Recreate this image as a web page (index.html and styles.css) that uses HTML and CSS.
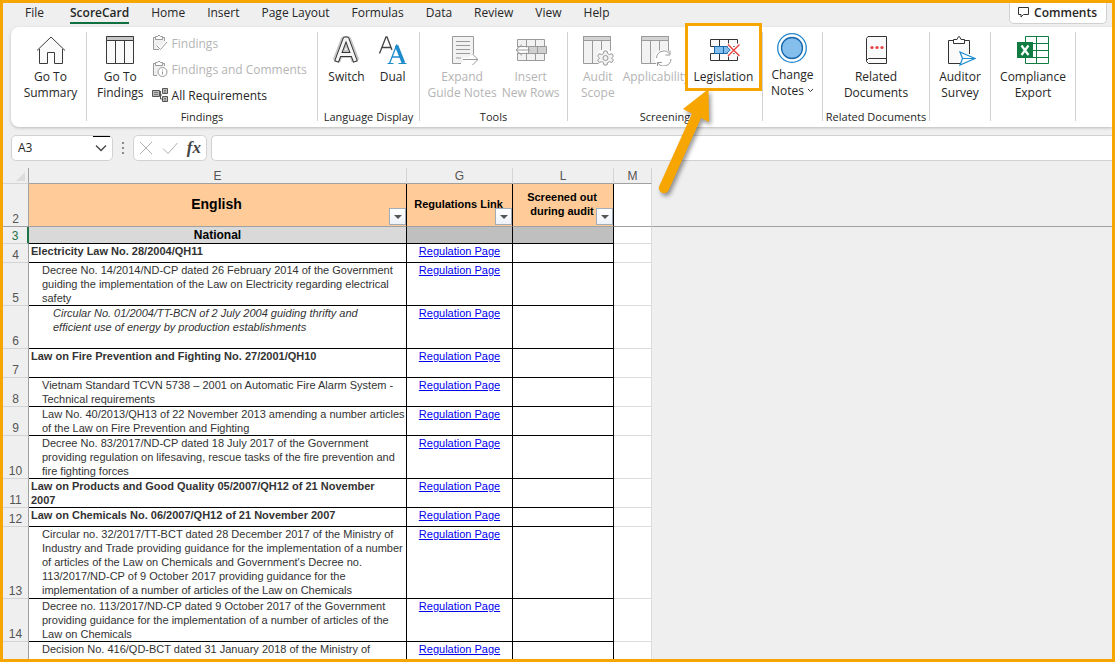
FILE: index.html
```html
<!DOCTYPE html>
<html lang="en">
<head>
<meta charset="utf-8">
<title>ScoreCard</title>
<link rel="stylesheet" href="styles.css">
</head>
<body>
<div class="window">
  <nav class="tabs">
    <button class="tab first">File</button>
    <button class="tab active">ScoreCard</button>
    <button class="tab">Home</button>
    <button class="tab">Insert</button>
    <button class="tab">Page Layout</button>
    <button class="tab">Formulas</button>
    <button class="tab">Data</button>
    <button class="tab">Review</button>
    <button class="tab">View</button>
    <button class="tab">Help</button>
    <button class="comments">
      <svg width="12" height="12" viewBox="0 0 12 12" fill="none" stroke="#333"><path d="M.5 1.500h10v7h-5l-2.500 2.500v-2.500h-2.500z"/></svg>
      Comments
    </button>
  </nav>

  <section class="ribbon">
    <div class="group g-summary">
      <div class="tools">
        <button class="tool">
          <svg class="icon" viewBox="0 0 32 32" fill="none" stroke="#3b3b3b"><path fill="#fafafa" d="M4.500 15v14.500h8v-11h7v11h8V15L16 3.500z" stroke="none"/><path d="M2 16.500L16 3l14 13.500M4.500 15v14.500h8v-11h7v11h8V15"/></svg>
          <span>Go To<br>Summary</span>
        </button>
      </div>
    </div>
    <div class="group g-findings">
      <div class="tools">
        <button class="tool">
          <svg class="icon" viewBox="0 0 32 32" fill="#fafafa" stroke="#3b3b3b"><path d="M2.500 2.500h27v27h-27z"/><path fill="#c8c8c8" d="M2.500 2.500h27v4h-27z"/><path d="M11.500 6v23M20.500 6v23"/></svg>
          <span>Go To<br>Findings</span>
        </button>
        <div class="stack">
          <button class="row-tool" disabled>
            <svg width="16" height="18" viewBox="0 0 16 18" fill="none" stroke="#9a9a9a"><path fill="#f0f0f0" d="M6 15.500H1.500v-12h11V8l-4 5-2-2-2 1z" stroke="none"/><path d="M7 15.500H1.500v-12h2M10.500 3.500h2V7"/><path fill="#fff" d="M3.500 5.500v-3h2Q7-.5 8.500 2.500h2v3z"/><path d="M4.500 11.500l4 4 6.500-7.500"/></svg>
            Findings
          </button>
          <button class="row-tool" disabled>
            <svg width="16" height="18" viewBox="0 0 16 18" fill="none" stroke="#9a9a9a"><path fill="#f0f0f0" d="M5 15.500H1.500v-12h11V8z" stroke="none"/><path d="M5 15.500H1.500v-12h2M10.500 3.500h2V6"/><path fill="#fff" d="M3.500 5.500v-3h2Q7-.5 8.500 2.500h2v3z"/><circle cx="10.500" cy="12" r="4.500" fill="#fff"/><path d="M10.500 11.500v3M10.500 9.500v1"/></svg>
            Findings and Comments
          </button>
          <button class="row-tool">
            <svg width="16" height="16" viewBox="0 0 16 16" fill="#bbb" stroke="#555"><path d="M6 8h4M8.500 4v8h2" fill="none"/><path d="M.5 3.500h7v6h-7zM10.500 1.500h5v5h-5zM10.500 9.500h5v5h-5z"/><path d="M2 5.500h4M2 7.500h4M12 3.500h2M12 5h2M12 11.500h2M12 13h2" stroke="#777"/></svg>
            All Requirements
          </button>
        </div>
      </div>
      <div class="caption">Findings</div>
    </div>
    <div class="group g-language">
      <div class="tools">
        <button class="tool">
          <svg class="icon" viewBox="0 0 32 32" fill="none" stroke-linejoin="round"><path d="M6.500 27L14.500 6h3L25.500 27M10 20h12" stroke="#c6c6c6" stroke-width="8"/><path d="M6.500 28L15 5h2l8.500 23M10 20.500h12" stroke="#333" stroke-width="5"/><path d="M6.800 27L15 5h2l8.200 22M10 20.500h12" stroke="#f5f5f5" stroke-width="3"/></svg>
          <span>Switch</span>
        </button>
        <button class="tool">
          <svg class="icon" viewBox="0 0 32 32" fill="none"><path d="M2.500 19.500L9 3h1l5 13M5 13.500h9" stroke="#444" stroke-width="1.300"/><path d="M12.500 29.500l7-18 7.500 18M14.500 23h9" stroke="#1e8bcd" stroke-width="1.300"/><path d="M19.500 11.500l7 17.500" stroke="#1e8bcd" stroke-width="3.500"/><path d="M10.500 29.500h6M21.500 29.500h8" stroke="#1e8bcd"/></svg>
          <span>Dual</span>
        </button>
      </div>
      <div class="caption">Language Display</div>
    </div>
    <div class="group g-tools">
      <div class="tools">
        <button class="tool" disabled>
          <svg class="icon" viewBox="0 0 32 32" fill="none" stroke="#9a9a9a"><path fill="#f2f2f2" d="M14 29.500H6.500v-27h21V20" stroke="none"/><path d="M15 29.500H6.500v-27h21V20"/><path d="M10 7.500h14M10 11.500h14M10 15.500h14M10 19.500h14M10 24h5"/><path stroke="#fff" stroke-width="4" d="M17 25.500h12"/><path d="M17 25.500h15M26.500 20l5.500 5.500-5.500 5.500"/></svg>
          <span>Expand<br>Guide Notes</span>
        </button>
        <button class="tool" disabled>
          <svg class="icon" viewBox="0 0 32 32" fill="none" stroke="#9a9a9a"><path fill="#f2f2f2" d="M2.500 5.500h27v21h-27z"/><path d="M2.500 12.500h27M2.500 19.500h27M11.500 5v21M20.500 5v21"/><path stroke="#fff" stroke-width="5" d="M0 16h13"/><path fill="#d0d0d0" d="M13.500 12.500h18v7h-18zM22.500 12.500v7"/><path d="M1 16h14M7 10.500l-6 5.500 6 5.500"/></svg>
          <span>Insert<br>New Rows</span>
        </button>
      </div>
      <div class="caption">Tools</div>
    </div>
    <div class="group g-screening">
      <div class="tools">
        <button class="tool" disabled>
          <svg class="icon" viewBox="0 0 32 32" fill="#f2f2f2" stroke="#9a9a9a"><path d="M1.500 2.500h27v27h-27z"/><path fill="#d4d4d4" d="M1.500 2.500h27v4h-27z"/><path d="M10.500 6v23M19.500 6v23"/><circle cx="23.500" cy="24" r="9" fill="#fff" stroke="none"/><path d="M22 17h3l.6 2.500 1.800 1 2.500-.8 1.500 2.600-1.900 1.700 1.900 2-1.500 2.500-2.500-.8-1.800 1L25 31h-3l-.6-2.300-1.800-1-2.500.8-1.500-2.500 1.900-2-1.900-1.700 1.500-2.600 2.500.8 1.800-1z"/><circle cx="23.500" cy="24" r="2.500"/></svg>
          <span>Audit<br>Scope</span>
        </button>
        <button class="tool" disabled>
          <svg class="icon" viewBox="0 0 32 32" fill="#f2f2f2" stroke="#9a9a9a"><path d="M1.500 2.500h27v27h-27z"/><path fill="#d4d4d4" d="M1.500 2.500h27v4h-27z"/><path d="M10.500 6v23M19.500 6v23"/><circle cx="23.500" cy="24.500" r="9" fill="#fff" stroke="none"/><path fill="none" d="M16.500 24a7.300 7.300 0 0 1 13.500-3.500V16.500M30 21h-4.500M31 25a7.300 7.300 0 0 1-13.500 3.500V32M17.500 28.500H22"/></svg>
          <span>Applicability</span>
        </button>
        <button class="tool highlighted">
          <svg class="icon" viewBox="0 0 32 32" fill="none" stroke="#333"><path fill="#fafafa" d="M2.500 5.500h27v7h-27zM2.500 19.500h27v7h-27z"/><path d="M11.500 5v7M20.500 5v7M11.500 19v7M20.500 19v7"/><path fill="#83beec" stroke="#1767ad" d="M6.500 12.500h12l4 3.500-4 3.500h-12zM15.500 12.500v7"/><path stroke="#fff" stroke-width="4" d="M20 10l12 12M32 10L20 22"/><path stroke="#e8413f" stroke-width="1.400" d="M20 10.500l11.500 11.500M31.500 10.500L20 22"/></svg>
          <span>Legislation</span>
          <svg class="pointer" width="64" height="112" viewBox="0 0 64 112"><path d="M54.500 2L29 22l9 4.500L5.500 98.500a5 5 0 0 0 9 5L47 31l8 4z" fill="#f7a500"/></svg>
        </button>
      </div>
      <div class="caption">Screening</div>
    </div>
    <div class="group g-notes">
      <div class="tools">
        <button class="tool">
          <svg class="icon" viewBox="0 0 32 32" fill="none" stroke="#1f86cf"><circle cx="16" cy="16" r="14.300" stroke-width="1.300"/><circle cx="16" cy="16" r="10.500" fill="#83beec" stroke="#1767ad" stroke-width="1.300"/></svg>
          <span>Change<br>Notes <svg width="7" height="8" viewBox="0 0 7 8" fill="none" stroke="#333"><path d="M1 2l2.500 2.500L6 2"/></svg></span>
        </button>
      </div>
    </div>
    <div class="group g-related">
      <div class="tools">
        <button class="tool">
          <svg class="icon" viewBox="0 0 32 32" fill="none" stroke="#333"><path fill="#fafafa" d="M8 2.500h18.500v27H8.500l-2-2v-23zM26 24.500H8.500l-2 2"/><g fill="#e8413f" stroke="none"><circle cx="12" cy="13.500" r="1.600"/><circle cx="17" cy="13.500" r="1.600"/><circle cx="22" cy="13.500" r="1.600"/></g></svg>
          <span>Related<br>Documents</span>
        </button>
      </div>
      <div class="caption">Related Documents</div>
    </div>
    <div class="group g-survey">
      <div class="tools">
        <button class="tool">
          <svg class="icon" viewBox="0 0 32 32" fill="none" stroke="#333"><path fill="#fafafa" d="M15 29.500H4.500v-23h21V20L16 18z" stroke="none"/><path d="M16 29.500H4.500v-23h5M20.500 6.500h5V20"/><path fill="#fff" d="M9.500 9.500v-4h3.500Q15-.5 17 5.500h3.500v4z"/><path fill="#fff" stroke="#1e8bcd" stroke-width="1.200" d="M16 18l15 6.500L16 31l2.500-6.500zM18.500 24.500H30"/></svg>
          <span>Auditor<br>Survey</span>
        </button>
      </div>
    </div>
    <div class="group g-export">
      <div class="tools">
        <button class="tool">
          <svg class="icon" viewBox="0 0 32 32" fill="none" stroke="#107c41"><path fill="#fff" d="M8.500 2.500h23v27h-23z"/><path d="M19.500 2v27M8 9.500h23M8 16.500h23M8 23.500h23"/><path d="M0 8h16v16H0z" fill="#107c41" stroke="none"/><path d="M4.500 11.500l7 9.500M11.500 11.500l-7 9.500" stroke="#fff" stroke-width="2.200"/></svg>
          <span>Compliance<br>Export</span>
        </button>
      </div>
    </div>
  </section>

  <div class="formula-bar">
    <label class="name-box">
      <input class="name-input" type="text" value="A3" aria-label="Name box">
      <svg width="12" height="8" viewBox="0 0 12 8" fill="none" stroke="#444" stroke-width="1.300"><path d="M1 1.500L6 6.500l5-5"/></svg>
    </label>
    <svg class="dots" width="3" height="12" viewBox="0 0 3 12" fill="#8a8a8a"><path d="M0 0h2v2H0zM0 5h2v2H0zM0 10h2v2H0z"/></svg>
    <div class="entry-buttons">
      <button aria-label="Cancel"><svg width="14" height="14" viewBox="0 0 14 14" stroke="#b0b0b0"><path d="M1 1l12 12M13 1L1 13"/></svg></button>
      <button aria-label="Enter"><svg width="16" height="14" viewBox="0 0 16 14" fill="none" stroke="#b0b0b0"><path d="M1 7.500l5 5L15.500 2"/></svg></button>
      <button class="fx">fx</button>
    </div>
    <input class="formula" type="text" aria-label="Formula">
  </div>

  <main class="sheet">
    <table>
      <colgroup><col class="c-num"><col class="c-e"><col class="c-g"><col class="c-l"><col class="c-m"><col></colgroup>
      <thead>
        <tr class="letters"><th class="corner"><svg width="9" height="9" viewBox="0 0 9 9" fill="#dcdcdc"><path d="M9 0v9H0z"/></svg></th><th>E</th><th>G</th><th>L</th><th>M</th><th class="void"></th></tr>
        <tr class="titles">
          <th class="num">2</th>
          <th class="title big">English<button class="filter" aria-label="Filter English"></button></th>
          <th class="title">Regulations Link<button class="filter" aria-label="Filter links"></button></th>
          <th class="title">Screened out<br>during audit<button class="filter" aria-label="Filter screened out"></button></th>
          <td class="m"></td><td class="void"></td>
        </tr>
      </thead>
      <tbody>
        <tr class="national"><th class="num">3</th><td class="region">National</td><td class="dark"></td><td class="dark"></td><td class="m"></td><td class="void"></td></tr>
        <tr class="h1"><th class="num">4</th><td class="law">Electricity Law No. 28/2004/QH11</td><td class="link"><a href="#">Regulation Page</a></td><td></td><td class="m"></td><td class="void"></td></tr>
        <tr class="h3"><th class="num">5</th><td class="decree">Decree No. 14/2014/ND-CP dated 26 February 2014 of the Government<br>guiding the implementation of the Law on Electricity regarding electrical<br>safety</td><td class="link"><a href="#">Regulation Page</a></td><td></td><td class="m"></td><td class="void"></td></tr>
        <tr class="h3"><th class="num">6</th><td class="circular">Circular No. 01/2004/TT-BCN of 2 July 2004 guiding thrifty and<br>efficient use of energy by production establishments</td><td class="link"><a href="#">Regulation Page</a></td><td></td><td class="m"></td><td class="void"></td></tr>
        <tr class="h2"><th class="num">7</th><td class="law">Law on Fire Prevention and Fighting No. 27/2001/QH10</td><td class="link"><a href="#">Regulation Page</a></td><td></td><td class="m"></td><td class="void"></td></tr>
        <tr class="h2"><th class="num">8</th><td class="decree">Vietnam Standard TCVN 5738 – 2001 on Automatic Fire Alarm System -<br>Technical requirements</td><td class="link"><a href="#">Regulation Page</a></td><td></td><td class="m"></td><td class="void"></td></tr>
        <tr class="h2"><th class="num">9</th><td class="decree">Law No. 40/2013/QH13 of 22 November 2013 amending a number articles<br>of the Law on Fire Prevention and Fighting</td><td class="link"><a href="#">Regulation Page</a></td><td></td><td class="m"></td><td class="void"></td></tr>
        <tr class="h3"><th class="num">10</th><td class="decree">Decree No. 83/2017/ND-CP dated 18 July 2017 of the Government<br>providing regulation on lifesaving, rescue tasks of the fire prevention and<br>fire fighting forces</td><td class="link"><a href="#">Regulation Page</a></td><td></td><td class="m"></td><td class="void"></td></tr>
        <tr class="h2"><th class="num">11</th><td class="law">Law on Products and Good Quality 05/2007/QH12 of 21 November<br>2007</td><td class="link"><a href="#">Regulation Page</a></td><td></td><td class="m"></td><td class="void"></td></tr>
        <tr class="h1"><th class="num">12</th><td class="law">Law on Chemicals No. 06/2007/QH12 of 21 November 2007</td><td class="link"><a href="#">Regulation Page</a></td><td></td><td class="m"></td><td class="void"></td></tr>
        <tr class="h5"><th class="num">13</th><td class="decree">Circular no. 32/2017/TT-BCT dated 28 December 2017 of the Ministry of<br>Industry and Trade providing guidance for the implementation of a number<br>of articles of the Law on Chemicals and Government's Decree no.<br>113/2017/ND-CP of 9 October 2017 providing guidance for the<br>implementation of a number of articles of the Law on Chemicals</td><td class="link"><a href="#">Regulation Page</a></td><td></td><td class="m"></td><td class="void"></td></tr>
        <tr class="h3"><th class="num">14</th><td class="decree">Decree no. 113/2017/ND-CP dated 9 October 2017 of the Government<br>providing guidance for the implementation of a number of articles of the<br>Law on Chemicals</td><td class="link"><a href="#">Regulation Page</a></td><td></td><td class="m"></td><td class="void"></td></tr>
        <tr class="h3"><th class="num"></th><td class="decree">Decision No. 416/QD-BCT dated 31 January 2018 of the Ministry of<br>Industry and Trade on promulgating periodic/administrative</td><td class="link"><a href="#">Regulation Page</a></td><td></td><td class="m"></td><td class="void"></td></tr>
      </tbody>
    </table>
  </main>
</div>
</body>
</html>
```
FILE: styles.css
```css
* { box-sizing: border-box; }
body { margin: 0; font-family: "Open Sans", "Noto Sans", sans-serif; font-size: 12px; color: #262626; }
button { font: inherit; color: inherit; background: none; border: 0; padding: 0; margin: 0; white-space: nowrap; }
input { font: inherit; color: inherit; border: 0; outline: 0; background: none; min-width: 0; }
svg { flex: none; }

.window { height: 100vh; border: 3px solid #f7a500; background: #efefef; overflow: hidden; display: flex; flex-direction: column; }

.tabs { flex: none; display: flex; align-items: flex-start; gap: 22px; height: 24px; padding: 0 5px 0 22px; }
.tab { height: 21px; line-height: 19px; border-bottom: 2px solid transparent; }
.tab.first { padding-right: 4px; }
.tab.active { border-color: #107040; font-weight: 600; }
.comments { margin-left: auto; display: flex; align-items: center; gap: 4px; height: 21px; padding: 0 9px 2px 8px; background: #fff; border: 1px solid #d0d0d0; border-top: 0; border-radius: 0 0 5px 5px; font-weight: 600; }

.ribbon { flex: none; display: flex; height: 100px; margin-left: 8px; padding: 5px 0 6px; background: #fff; border-radius: 8px 0 0 8px; box-shadow: 0 1px 3px #bbb; }
.group { flex: none; position: relative; display: flex; flex-direction: column; justify-content: space-between; border-right: 1px solid #d2d2d2; }
.tools { display: flex; justify-content: center; align-items: flex-start; padding-top: 2px; }
.tool { display: flex; flex-direction: column; align-items: center; gap: 3px; line-height: 16px; text-align: center; }
.tool:disabled, .row-tool:disabled { color: #b4b4b4; }
.icon { width: 32px; height: 32px; }
.caption { font-size: 11px; line-height: 14px; text-align: center; white-space: nowrap; margin-bottom: -3px; }
.stack { display: flex; flex-direction: column; }
.row-tool { display: flex; align-items: center; gap: 4px; height: 26px; }

.g-summary { width: 76px; }
.g-summary .tools { padding-left: 4px; }
.g-findings { width: 231px; }
.g-findings .tools { justify-content: flex-start; gap: 8px; padding-left: 10px; }
.g-findings .stack { margin-top: -4px; height: 78px; }
.g-language { width: 102px; }
.g-language .tools { gap: 12px; }
.g-tools { width: 148px; }
.g-tools .tools { gap: 5px; }
.g-screening { width: 195px; }
.g-screening .tools { justify-content: flex-start; padding-left: 13px; gap: 8px; }
.g-notes { width: 60px; }
.g-notes .tools { padding-top: 0; }
.g-related { width: 107px; }
.g-survey { width: 61px; }
.g-export { width: 85px; }

.highlighted { position: absolute; right: 0; top: -9px; width: 77px; height: 68px; padding-top: 8px; background: #fff; border: 3px solid #f7a500; }
.pointer { position: absolute; left: -34px; top: 61px; z-index: 2; filter: drop-shadow(2px 3px 2px #0006); }

.formula-bar { flex: none; display: flex; align-items: center; height: 41px; padding-left: 8px; }
.name-box, .entry-buttons, .formula { height: 26px; background: #fff; border: 1px solid #d2d2d2; border-radius: 5px; }
.name-box { position: relative; display: flex; align-items: center; width: 102px; padding: 0 5px 0 6px; }
.name-box::after { content: ""; position: absolute; top: 0; right: 2px; width: 17px; height: 1px; background: #000; }
.name-input { flex: 1; padding: 0; }
.dots { margin: 0 8px 0 9px; }
.entry-buttons { display: flex; align-items: center; justify-content: space-between; width: 74px; padding: 0 5px; }
.entry-buttons button { display: flex; }
.entry-buttons .fx { font: italic bold 17px/20px "Liberation Serif", serif; color: #444; }
.formula { flex: 1; margin-left: 4px; border-right: 0; border-radius: 5px 0 0 5px; }

.sheet { flex: 1; min-height: 0; overflow: hidden; font-family: "Liberation Sans", Arial, sans-serif; }
table { width: 100%; table-layout: fixed; border-collapse: separate; border-spacing: 0; font-size: 11px; line-height: 14px; }
.c-num { width: 26px; }
.c-e { width: 378px; }
.c-g { width: 106px; }
.c-l { width: 101px; }
.c-m { width: 38px; }
th, td { padding: 0; vertical-align: top; white-space: nowrap; }
td { background: #fff; border-right: 1px solid #000; border-bottom: 1px solid #000; color: #333; }
.letters th { height: 16px; font-size: 12px; font-weight: 400; color: #555; border-right: 1px solid #d4d4d4; border-bottom: 1px solid #a0a0a0; vertical-align: middle; }
.letters .corner { text-align: right; padding: 2px 3px 0 0; line-height: 9px; border-right-color: #a0a0a0; border-bottom-color: #d4d4d4; }
.num { font-size: 12px; line-height: 14px; font-weight: 400; color: #555; vertical-align: bottom; text-align: center; border-right: 1px solid #a0a0a0; border-bottom: 1px solid #d4d4d4; }
.titles > * { height: 43px; border-bottom: 1px solid #a0a0a0; }
.title { position: relative; background: #ffcc99; border-right: 1px solid #000; color: #000; vertical-align: middle; padding: 0 2px 2px 0; }
.big { font-size: 14px; }
.filter { position: absolute; right: 0; bottom: 1px; width: 17px; height: 17px; background: linear-gradient(#fff, #eef2f8); border: 1px solid #a3adba; }
.filter::after { content: ""; position: absolute; left: 4px; top: 6px; border: 4px solid transparent; border-top-color: #555; border-bottom: 0; }
.national > * { height: 17px; }
.national .num { color: #217346; border-right: 2px solid #217346; }
.region { background: #d9d9d9; color: #000; font-size: 12px; line-height: 16px; font-weight: 700; text-align: center; }
.dark { background: #bfbfbf; }
.h1 > * { height: 19px; }
.h2 > * { height: 29px; }
.h3 > * { height: 43px; }
.h5 > * { height: 72px; }
.law { font-weight: 700; padding-left: 2px; }
.decree { padding-left: 13px; }
.circular { padding-left: 24px; font-style: italic; }
.link { text-align: center; }
a { color: #00e; text-decoration: underline; }
.m { border-color: #dcdcdc; }
.letters .void, .void { background: #efefef; border-right: 0; border-bottom: 0; }
.titles .m, .titles .void { border-bottom: 1px solid #a0a0a0; }
```
